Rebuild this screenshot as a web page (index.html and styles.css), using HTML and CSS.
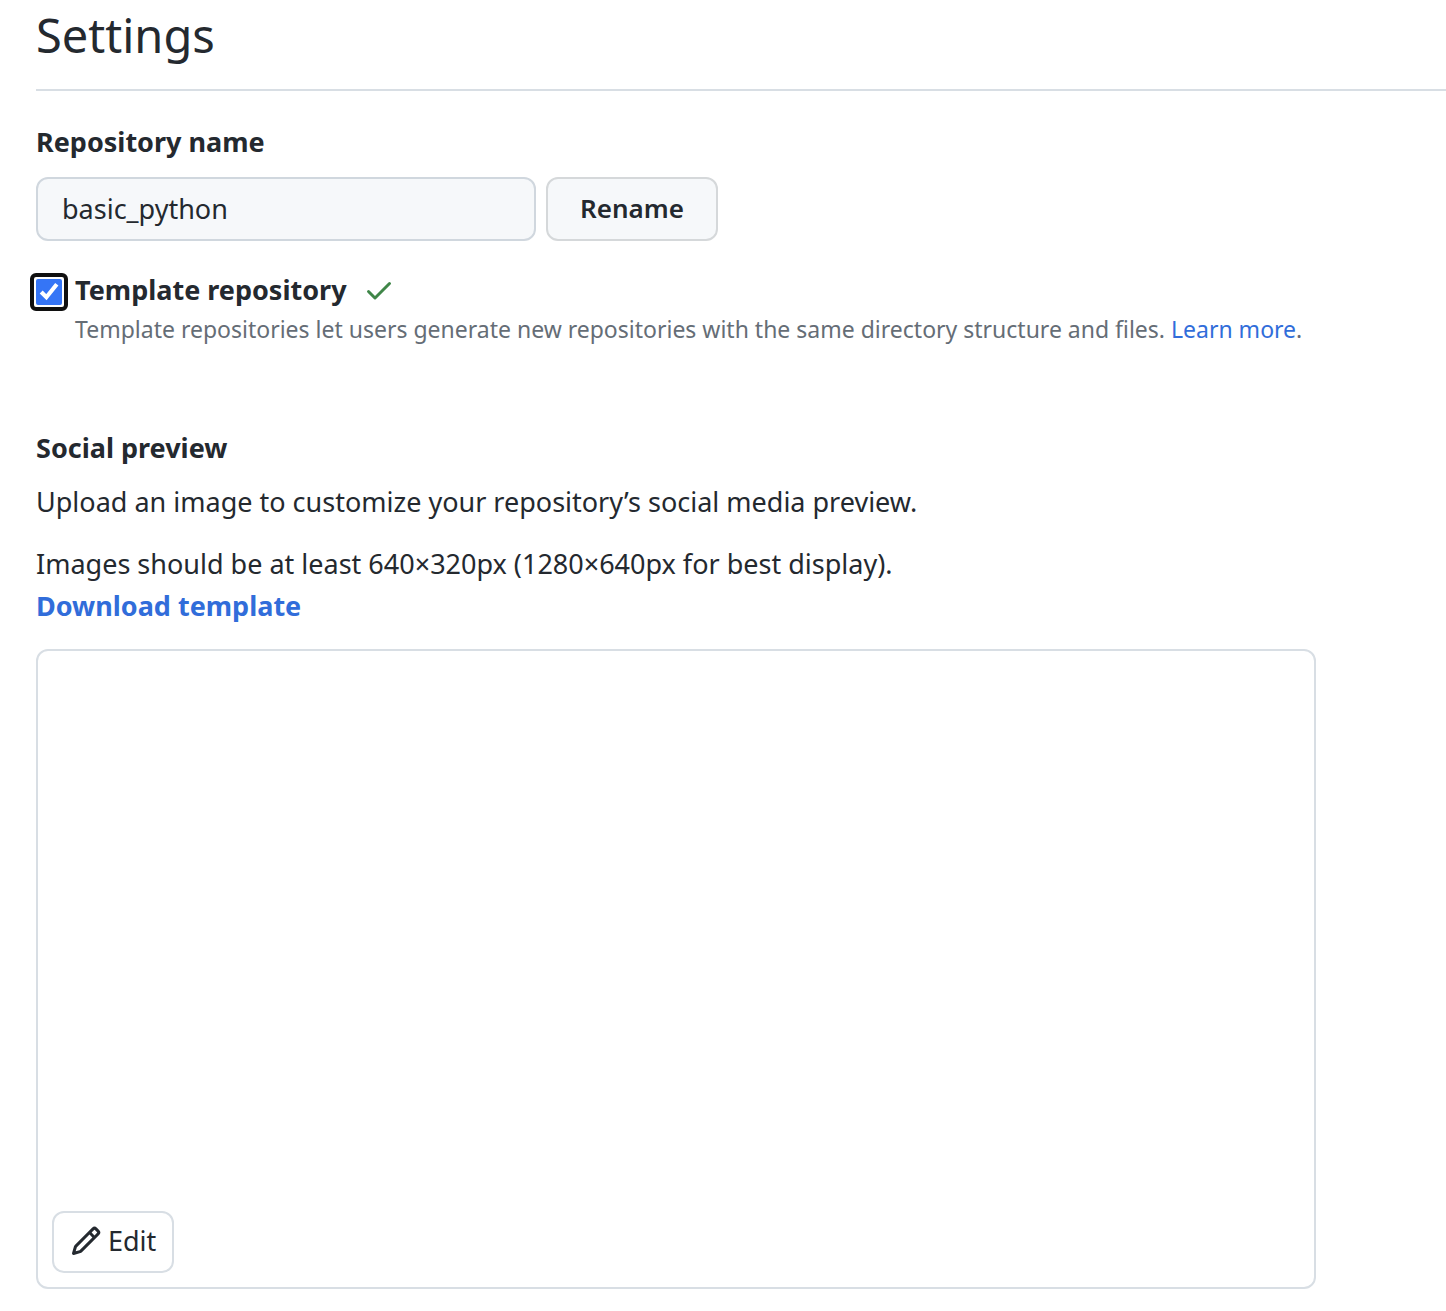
FILE: index.html
```html
<!DOCTYPE html>
<html lang="en">
<head>
<meta charset="utf-8">
<meta name="viewport" content="width=device-width, initial-scale=1">
<title>Settings</title>
<link rel="stylesheet" href="styles.css">
</head>
<body>
<main class="settings">
  <h1 class="page-title">Settings</h1>

  <form class="rename-form">
    <label class="field-label" for="repo-name">Repository name</label>
    <div class="rename-row">
      <input class="text-input" id="repo-name" type="text" value="basic_python">
      <button class="btn btn-rename" type="button">Rename</button>
    </div>
  </form>

  <div class="template-option">
    <span class="checkbox-ring"><input class="checkbox" id="template" type="checkbox" checked aria-describedby="template-hint"></span>
    <div class="template-text">
      <div class="template-heading">
        <label class="template-label" for="template">Template repository</label>
        <svg class="saved-icon" viewBox="0 0 16 16" aria-hidden="true"><path d="M13.78 4.22a.75.75 0 0 1 0 1.06l-7.25 7.25a.75.75 0 0 1-1.06 0L2.22 9.28a.75.75 0 0 1 1.06-1.06L6 10.94l6.72-6.72a.75.75 0 0 1 1.06 0Z"/></svg>
      </div>
      <p class="hint" id="template-hint">Template repositories let users generate new repositories with the same directory structure and files. <a class="link" href="#template-help">Learn more</a>.</p>
    </div>
  </div>

  <section class="social">
    <h2 class="section-title">Social preview</h2>
    <p class="intro">Upload an image to customize your repository’s social media preview.</p>
    <p class="requirements">Images should be at least 640×320px (1280×640px for best display).<br>
      <a class="link link-strong" href="#template-file">Download template</a></p>
    <div class="preview">
      <button class="btn btn-edit" type="button">
        <svg class="edit-icon" viewBox="0 0 16 16" aria-hidden="true"><path fill-rule="evenodd" d="M11.013 1.427a1.75 1.75 0 0 1 2.474 0l1.086 1.086a1.75 1.75 0 0 1 0 2.474l-8.61 8.61c-.21.21-.47.364-.756.445l-3.251.93a.75.75 0 0 1-.927-.928l.929-3.25a1.75 1.75 0 0 1 .445-.758l8.61-8.61Zm1.414 1.06a.25.25 0 0 0-.354 0L10.811 3.75l1.439 1.44 1.263-1.263a.25.25 0 0 0 0-.354l-1.086-1.086ZM11.189 6.25 9.75 4.81l-6.286 6.287a.25.25 0 0 0-.064.108l-.558 1.953 1.953-.558a.249.249 0 0 0 .108-.064l6.286-6.286Z"/></svg>
        Edit
      </button>
    </div>
  </section>
</main>
</body>
</html>
```
FILE: styles.css
```css
* {
  box-sizing: border-box;
}

body {
  margin: 0;
  background: #fff;
  color: #24292f;
  font: 27px/42px "Noto Sans", sans-serif;
}

h1,
h2,
p {
  margin: 0;
}

.settings {
  padding: 0 0 22px 36px;
}

.page-title {
  margin-bottom: 30px;
  padding-bottom: 19px;
  border-bottom: 2px solid #d8dee4;
  font-size: 47px;
  font-weight: 400;
  line-height: 70px;
}

.field-label,
.section-title,
.template-label {
  font-size: 27px;
  font-weight: 700;
}

.field-label {
  display: block;
}

.rename-row {
  display: flex;
  flex-wrap: wrap;
  gap: 10px;
  margin-top: 14px;
}

.text-input {
  width: 500px;
  max-width: 100%;
  height: 64px;
  padding: 0 24px 2px;
  border: 2px solid #d0d7de;
  border-radius: 12px;
  background: #f6f8fa;
  color: inherit;
  font: inherit;
}

.btn {
  border: 2px solid #d0d7de;
  border-radius: 12px;
  color: inherit;
  font: inherit;
}

.btn-rename {
  width: 172px;
  height: 64px;
  padding: 0 0 2px;
  border-color: #d5d8da;
  background: #f6f8fa;
  font-size: 26px;
  font-weight: 600;
}

.template-option {
  display: flex;
  gap: 7px;
  margin-top: 28px;
  margin-left: -6px;
}

.checkbox-ring {
  display: flex;
  flex: none;
  align-self: flex-start;
  margin-top: 4px;
  padding: 2px;
  border: 4px solid #101010;
  border-radius: 6px;
}

.checkbox {
  width: 26px;
  height: 26px;
  margin: 0;
  accent-color: #3575f6;
}

.template-heading {
  display: flex;
  align-items: center;
  gap: 16px;
}

.saved-icon {
  width: 32px;
  height: 32px;
  fill: #3f8648;
}

.hint {
  color: #656d76;
  font-size: 23px;
  line-height: 36px;
}

.link {
  color: #316dda;
  text-decoration: none;
}

.link-strong {
  font-weight: 700;
}

.social {
  margin-top: 80px;
}

.intro {
  margin-top: 12px;
}

.requirements {
  margin-top: 20px;
}

.preview {
  display: flex;
  align-items: flex-end;
  width: 1280px;
  max-width: 100%;
  aspect-ratio: 2 / 1;
  margin-top: 22px;
  padding: 14px;
  border: 2px solid #d8dee4;
  border-radius: 12px;
}

.btn-edit {
  display: flex;
  align-items: center;
  gap: 6px;
  height: 62px;
  padding: 0 16px 2px;
  border-color: #d8dee4;
  background: #fff;
}

.edit-icon {
  width: 32px;
  height: 32px;
  fill: #24292f;
}
```
